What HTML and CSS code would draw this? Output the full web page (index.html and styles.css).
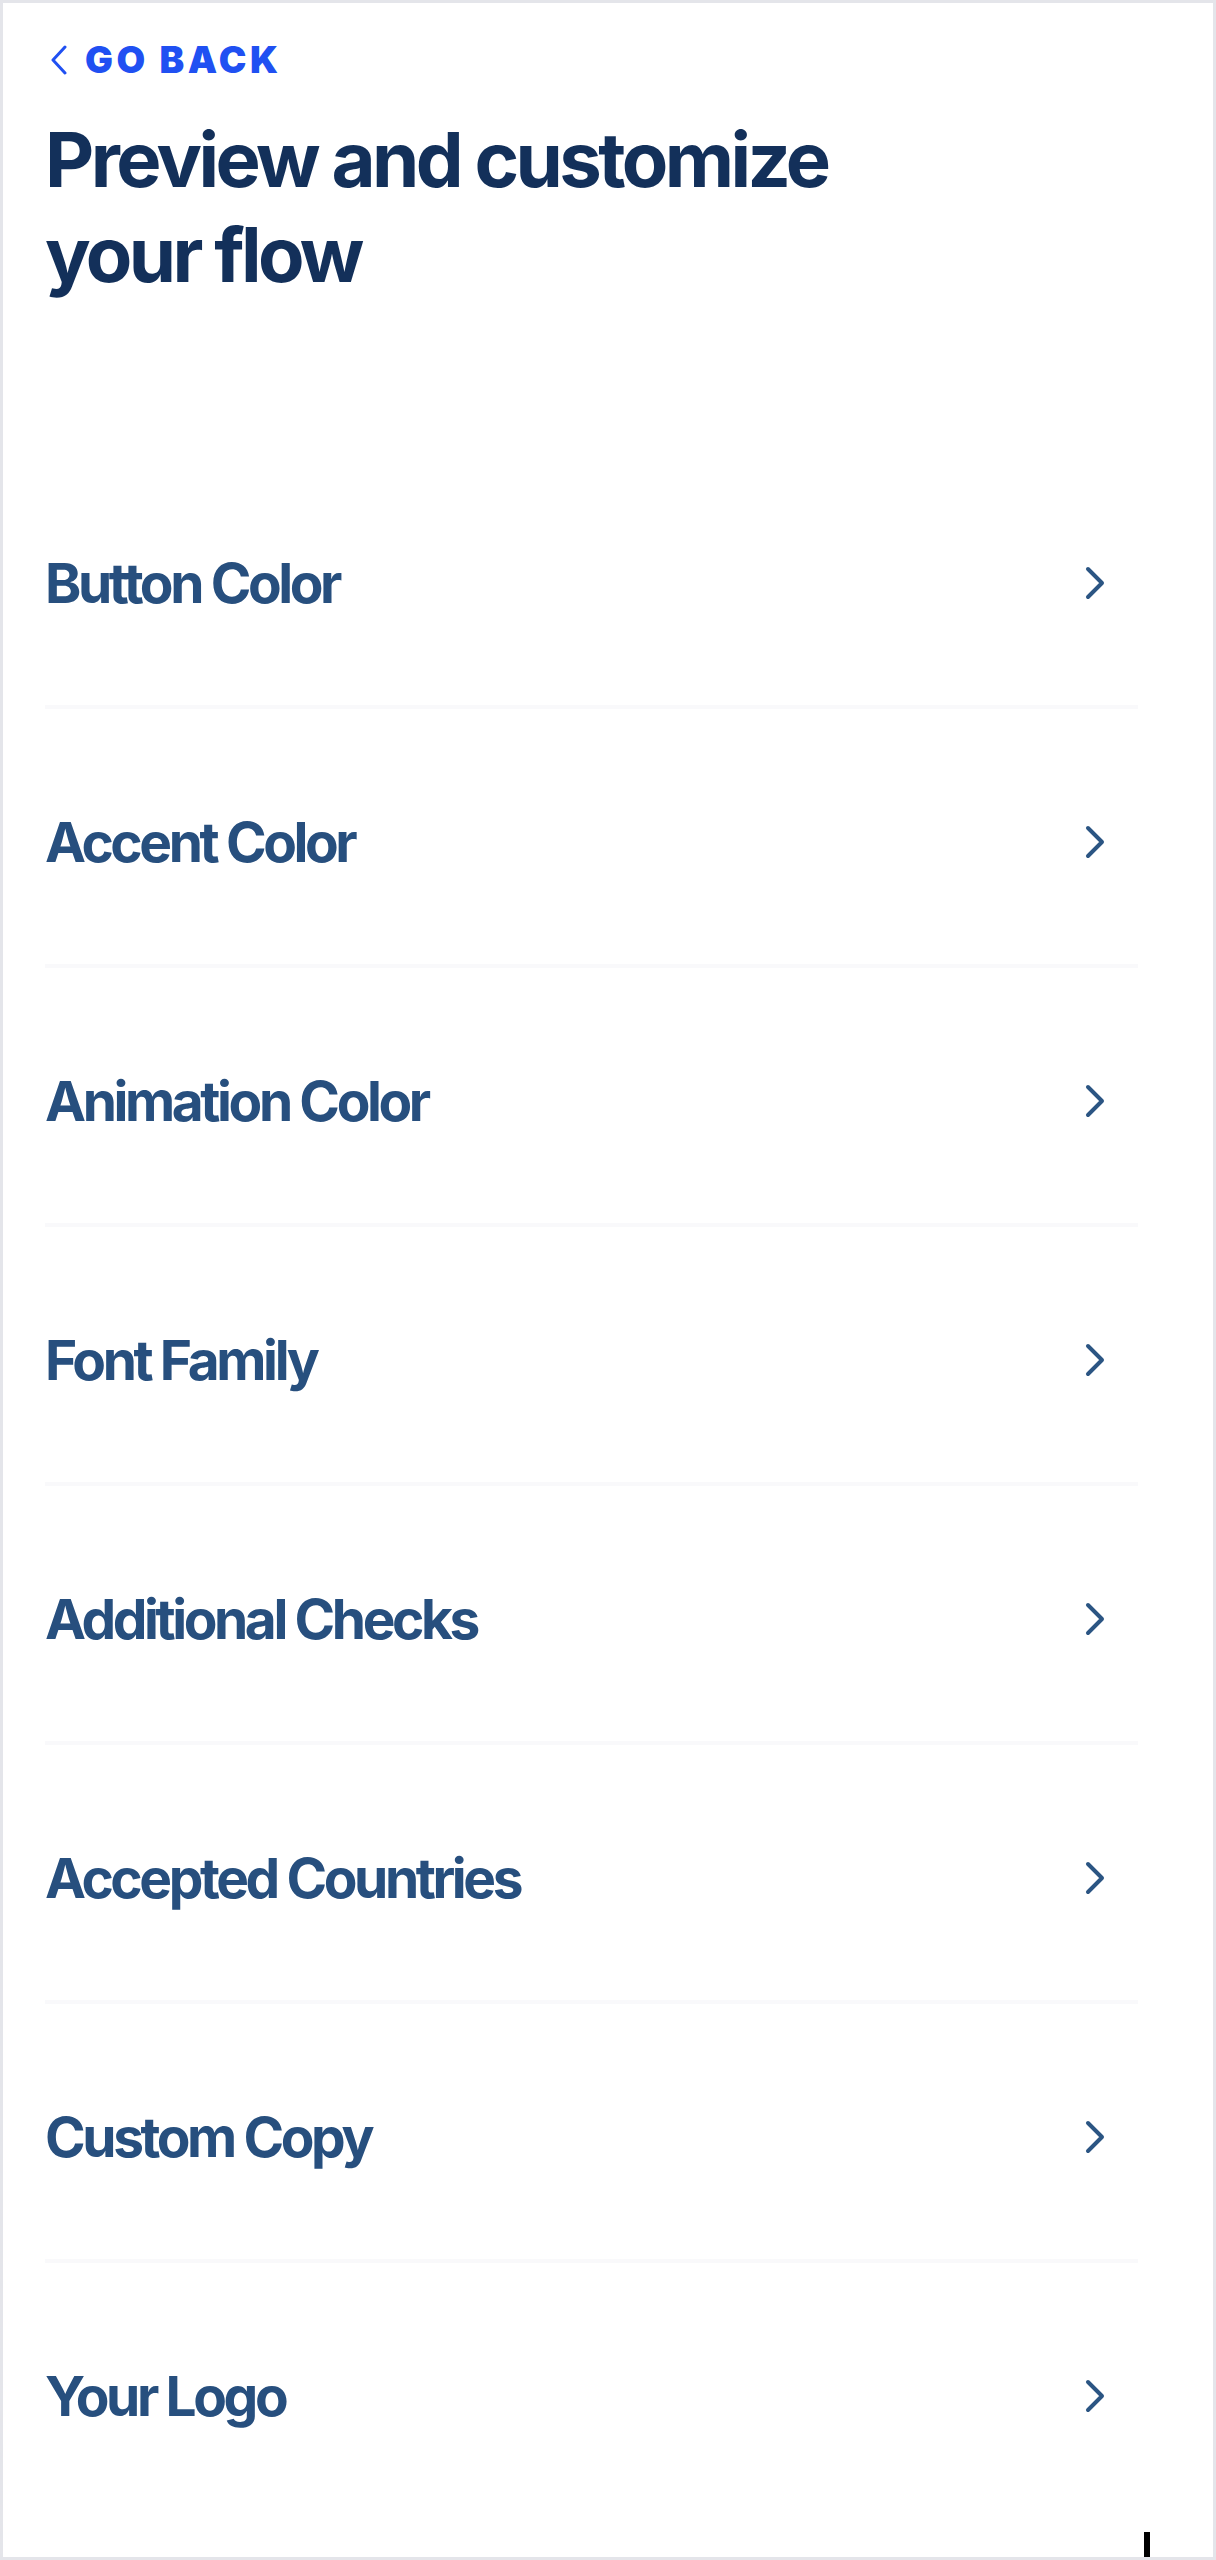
FILE: index.html
```html
<!DOCTYPE html>
<html lang="en">
<head>
<meta charset="utf-8">
<title>Preview and customize your flow</title>
<link rel="stylesheet" href="styles.css">
</head>
<body>
<div class="frame">
  <a class="back" href="#">
    <svg class="back-icon" width="18" height="30" viewBox="0 0 18 30"><path d="M15 2 L3 15 L15 28" fill="none" stroke="currentColor" stroke-width="3" stroke-linecap="round" stroke-linejoin="round"/></svg>
    <span>GO BACK</span>
  </a>
  <h1 class="title">Preview and customize<br>your flow</h1>
  <ul class="list">
    <li class="row"><span class="label">Button Color</span><svg class="chev" width="20" height="34" viewBox="0 0 20 34"><path d="M3 3 L17 17 L3 31" fill="none" stroke="currentColor" stroke-width="4" stroke-linecap="round" stroke-linejoin="round"/></svg></li>
    <li class="row"><span class="label">Accent Color</span><svg class="chev" width="20" height="34" viewBox="0 0 20 34"><path d="M3 3 L17 17 L3 31" fill="none" stroke="currentColor" stroke-width="4" stroke-linecap="round" stroke-linejoin="round"/></svg></li>
    <li class="row"><span class="label">Animation Color</span><svg class="chev" width="20" height="34" viewBox="0 0 20 34"><path d="M3 3 L17 17 L3 31" fill="none" stroke="currentColor" stroke-width="4" stroke-linecap="round" stroke-linejoin="round"/></svg></li>
    <li class="row"><span class="label">Font Family</span><svg class="chev" width="20" height="34" viewBox="0 0 20 34"><path d="M3 3 L17 17 L3 31" fill="none" stroke="currentColor" stroke-width="4" stroke-linecap="round" stroke-linejoin="round"/></svg></li>
    <li class="row"><span class="label">Additional Checks</span><svg class="chev" width="20" height="34" viewBox="0 0 20 34"><path d="M3 3 L17 17 L3 31" fill="none" stroke="currentColor" stroke-width="4" stroke-linecap="round" stroke-linejoin="round"/></svg></li>
    <li class="row"><span class="label">Accepted Countries</span><svg class="chev" width="20" height="34" viewBox="0 0 20 34"><path d="M3 3 L17 17 L3 31" fill="none" stroke="currentColor" stroke-width="4" stroke-linecap="round" stroke-linejoin="round"/></svg></li>
    <li class="row"><span class="label">Custom Copy</span><svg class="chev" width="20" height="34" viewBox="0 0 20 34"><path d="M3 3 L17 17 L3 31" fill="none" stroke="currentColor" stroke-width="4" stroke-linecap="round" stroke-linejoin="round"/></svg></li>
    <li class="row"><span class="label">Your Logo</span><svg class="chev" width="20" height="34" viewBox="0 0 20 34"><path d="M3 3 L17 17 L3 31" fill="none" stroke="currentColor" stroke-width="4" stroke-linecap="round" stroke-linejoin="round"/></svg></li>
  </ul>
  <span class="cursor"></span>
</div>
</body>
</html>
```
FILE: styles.css
```css
* { box-sizing: border-box; }
html, body { margin: 0; padding: 0; background: #ffffff; }
body { font-family: Inter, "Noto Sans", "Liberation Sans", sans-serif; }

.frame {
  position: relative;
  width: 1216px;
  height: 2560px;
  border: 3px solid #e4e5ea;
  background: #ffffff;
  padding: 35px 0 0 42px;
}

.back {
  display: flex;
  align-items: center;
  gap: 17px;
  height: 44px;
  color: #2050f2;
  text-decoration: none;
  font-weight: 900;
  font-size: 37px;
  letter-spacing: 3.5px;
  line-height: 44px;
  padding-left: 5px;
}
.back-icon { flex: none; }

.title {
  margin: 30px 0 0 0;
  font-size: 76px;
  line-height: 95px;
  font-weight: 700;
  letter-spacing: -3.6px;
  color: #13305a;
}

.list {
  list-style: none;
  margin: 148px 0 0 0;
  padding: 0;
  width: 1093px;
}

.row {
  display: flex;
  align-items: center;
  justify-content: space-between;
  padding: 103px 33px 92px 0;
  border-bottom: 4px solid #f9f9fb;
}
.row:last-child { border-bottom: none; }

.label {
  font-size: 55px;
  line-height: 60px;
  font-weight: 700;
  letter-spacing: -3.4px;
  color: #274f7e;
}

.chev { flex: none; color: #2b5583; }

.cursor {
  position: absolute;
  left: 1141px;
  top: 2529px;
  width: 6px;
  height: 25px;
  background: #000000;
}
```
